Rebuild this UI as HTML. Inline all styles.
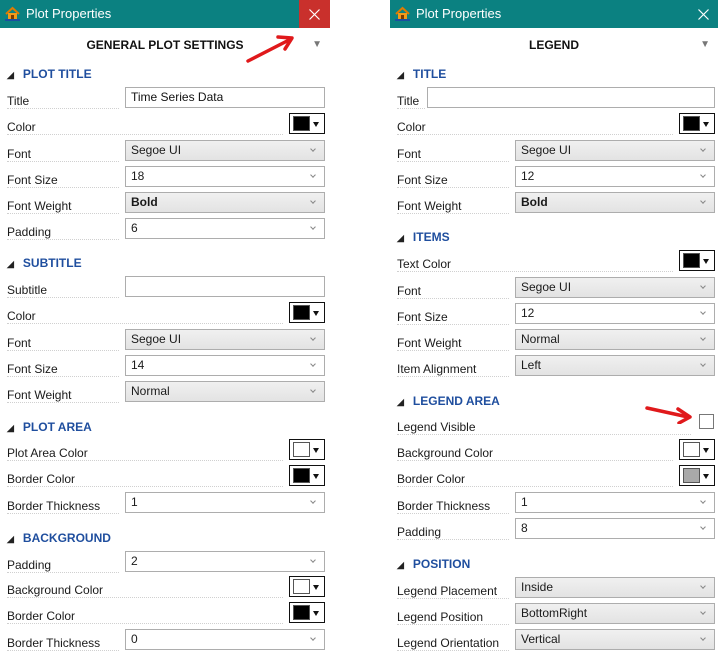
<!DOCTYPE html>
<html><head><meta charset="utf-8"><style>
*{box-sizing:border-box;margin:0;padding:0}
body{width:718px;height:667px;background:#fff;position:relative;overflow:hidden;font-family:"Segoe UI","Liberation Sans",sans-serif;font-size:12px;color:#1a1a1a}
.p{position:absolute;top:0;width:330px;height:667px;background:#fff}
.tb{position:absolute;left:0;top:0;right:0;height:28px;background:#0b8181;color:#fff;font-size:13px;line-height:27px;padding-left:26px}
.ic{position:absolute;left:5px;top:6px;width:15px;height:15px}
.x{position:absolute;top:0;right:0;width:30px;height:28px}
.x svg{position:absolute;left:10px;top:9px}
.hd{position:absolute;top:38px;left:0;right:0;text-align:center;font-weight:bold;font-size:12px;color:#111}
.dd{position:absolute;top:39px;right:8px;font-size:10px;color:#777}
.sec{position:absolute;left:7px;font-weight:bold;color:#1f4e9e;font-size:12px;line-height:14px}
.sec i{font-style:normal;color:#222;font-size:9px;margin-right:9px;display:inline-block}
.r{position:absolute;left:7px;right:5px;height:21px}
.r .dl{position:absolute;left:0;bottom:-1px;border-bottom:1px dotted #d0d0d0}
.r .lb{position:absolute;left:0;bottom:0;line-height:14px;background:#fff;padding-right:5px}
.c{position:absolute;right:0;width:200px;height:21px;border:1px solid #adadad;background:#fff;line-height:19px;padding-left:5px}
.c.g{background:linear-gradient(#f0f0f0,#e3e3e3)}
.c.v:after{content:"";position:absolute;right:9px;top:6px;width:3px;height:3px;border-right:1px solid #888;border-bottom:1px solid #888;transform:rotate(45deg)}
.sw{position:absolute;right:0;width:36px;height:21px;border:1px solid #111;background:#fff}
.sw b{position:absolute;left:3px;top:2px;width:17px;height:15px;border:1px solid #555;background:#000}
.sw:after{content:"";position:absolute;right:5px;top:8px;border-left:3.5px solid transparent;border-right:3.5px solid transparent;border-top:5px solid #111}
.cb{position:absolute;right:1px;top:1px;width:15px;height:15px;border:1px solid #777;background:#fff}
</style></head><body>

<div class="p" style="left:0">
<div class="tb"><svg class="ic" viewBox="0 0 15 15"><path d="M1 8L7.5 2 14 8" fill="none" stroke="#e07b00" stroke-width="2"/><rect x="3" y="7" width="9" height="6" fill="#f29a1a"/><rect x="6" y="9" width="3" height="4" fill="#7a3b00"/><path d="M0 13h15v2H0z" fill="#1a4fa0"/></svg>Plot Properties<div class="x" style="background:#c9302c;width:31px"><svg width="11" height="11"><path d="M0.5 0.5L10.5 10.5M10.5 0.5L0.5 10.5" stroke="#fff" stroke-width="1.2"/></svg></div></div>
<div class="hd">GENERAL PLOT SETTINGS</div><div class="dd">▼</div>
<svg style="position:absolute;left:245px;top:32px" width="50" height="32"><path d="M3 29L44 8" stroke="#e0191b" stroke-width="3.5" fill="none" stroke-linecap="round"/><path d="M33 5L47 6 40 17" stroke="#e0191b" stroke-width="3.5" fill="none" stroke-linecap="round" stroke-linejoin="round"/></svg>

<div class="sec" style="top:67px"><i>◢</i>PLOT TITLE</div>
<div class="r" style="top:87px"><div class="dl" style="width:112px"></div><span class="lb">Title</span><div class="c" style="color:#111">Time Series Data</div></div>
<div class="r" style="top:113px"><div class="dl" style="width:276px"></div><span class="lb">Color</span><div class="sw"><b></b></div></div>
<div class="r" style="top:140px"><div class="dl" style="width:112px"></div><span class="lb">Font</span><div class="c g v">Segoe UI</div></div>
<div class="r" style="top:166px"><div class="dl" style="width:112px"></div><span class="lb">Font Size</span><div class="c v">18</div></div>
<div class="r" style="top:192px"><div class="dl" style="width:112px"></div><span class="lb">Font Weight</span><div class="c g v"><b>Bold</b></div></div>
<div class="r" style="top:218px"><div class="dl" style="width:112px"></div><span class="lb">Padding</span><div class="c v">6</div></div>

<div class="sec" style="top:256px"><i>◢</i>SUBTITLE</div>
<div class="r" style="top:276px"><div class="dl" style="width:112px"></div><span class="lb">Subtitle</span><div class="c"></div></div>
<div class="r" style="top:302px"><div class="dl" style="width:276px"></div><span class="lb">Color</span><div class="sw"><b></b></div></div>
<div class="r" style="top:329px"><div class="dl" style="width:112px"></div><span class="lb">Font</span><div class="c g v">Segoe UI</div></div>
<div class="r" style="top:355px"><div class="dl" style="width:112px"></div><span class="lb">Font Size</span><div class="c v">14</div></div>
<div class="r" style="top:381px"><div class="dl" style="width:112px"></div><span class="lb">Font Weight</span><div class="c g v">Normal</div></div>

<div class="sec" style="top:420px"><i>◢</i>PLOT AREA</div>
<div class="r" style="top:439px"><div class="dl" style="width:276px"></div><span class="lb">Plot Area Color</span><div class="sw"><b style="background:#fff"></b></div></div>
<div class="r" style="top:465px"><div class="dl" style="width:276px"></div><span class="lb">Border Color</span><div class="sw"><b></b></div></div>
<div class="r" style="top:492px"><div class="dl" style="width:112px"></div><span class="lb">Border Thickness</span><div class="c v">1</div></div>

<div class="sec" style="top:531px"><i>◢</i>BACKGROUND</div>
<div class="r" style="top:551px"><div class="dl" style="width:112px"></div><span class="lb">Padding</span><div class="c v">2</div></div>
<div class="r" style="top:576px"><div class="dl" style="width:276px"></div><span class="lb">Background Color</span><div class="sw"><b style="background:#fff"></b></div></div>
<div class="r" style="top:602px"><div class="dl" style="width:276px"></div><span class="lb">Border Color</span><div class="sw"><b></b></div></div>
<div class="r" style="top:629px"><div class="dl" style="width:112px"></div><span class="lb">Border Thickness</span><div class="c v">0</div></div>
</div>

<div class="p" style="left:390px;width:328px">
<div class="tb"><svg class="ic" viewBox="0 0 15 15"><path d="M1 8L7.5 2 14 8" fill="none" stroke="#e07b00" stroke-width="2"/><rect x="3" y="7" width="9" height="6" fill="#f29a1a"/><rect x="6" y="9" width="3" height="4" fill="#7a3b00"/><path d="M0 13h15v2H0z" fill="#1a4fa0"/></svg>Plot Properties<div class="x"><svg width="11" height="11"><path d="M0.5 0.5L10.5 10.5M10.5 0.5L0.5 10.5" stroke="#fff" stroke-width="1.2"/></svg></div></div>
<div class="hd">LEGEND</div><div class="dd">▼</div>

<div class="sec" style="top:67px"><i>◢</i>TITLE</div>
<div class="r" style="top:87px;right:3px"><div class="dl" style="width:28px"></div><span class="lb">Title</span><div class="c" style="width:288px"></div></div>
<div class="r" style="top:113px;right:3px"><div class="dl" style="width:276px"></div><span class="lb">Color</span><div class="sw"><b></b></div></div>
<div class="r" style="top:140px;right:3px"><div class="dl" style="width:112px"></div><span class="lb">Font</span><div class="c g v">Segoe UI</div></div>
<div class="r" style="top:166px;right:3px"><div class="dl" style="width:112px"></div><span class="lb">Font Size</span><div class="c v">12</div></div>
<div class="r" style="top:192px;right:3px"><div class="dl" style="width:112px"></div><span class="lb">Font Weight</span><div class="c g v"><b>Bold</b></div></div>

<div class="sec" style="top:230px"><i>◢</i>ITEMS</div>
<div class="r" style="top:250px;right:3px"><div class="dl" style="width:276px"></div><span class="lb">Text Color</span><div class="sw"><b></b></div></div>
<div class="r" style="top:277px;right:3px"><div class="dl" style="width:112px"></div><span class="lb">Font</span><div class="c g v">Segoe UI</div></div>
<div class="r" style="top:303px;right:3px"><div class="dl" style="width:112px"></div><span class="lb">Font Size</span><div class="c v">12</div></div>
<div class="r" style="top:329px;right:3px"><div class="dl" style="width:112px"></div><span class="lb">Font Weight</span><div class="c g v">Normal</div></div>
<div class="r" style="top:355px;right:3px"><div class="dl" style="width:112px"></div><span class="lb">Item Alignment</span><div class="c g v">Left</div></div>

<div class="sec" style="top:394px"><i>◢</i>LEGEND AREA</div>
<svg style="position:absolute;left:254px;top:404px" width="50" height="20"><path d="M3 4L44 13" stroke="#e0191b" stroke-width="3.5" fill="none" stroke-linecap="round"/><path d="M34 5L46 13 35 19" stroke="#e0191b" stroke-width="3.5" fill="none" stroke-linecap="round" stroke-linejoin="round"/></svg>
<div class="r" style="top:413px;right:3px"><div class="dl" style="width:294px"></div><span class="lb">Legend Visible</span><div class="cb"></div></div>
<div class="r" style="top:439px;right:3px"><div class="dl" style="width:276px"></div><span class="lb">Background Color</span><div class="sw"><b style="background:#fff"></b></div></div>
<div class="r" style="top:465px;right:3px"><div class="dl" style="width:276px"></div><span class="lb">Border Color</span><div class="sw"><b style="background:#a9a9a9"></b></div></div>
<div class="r" style="top:492px;right:3px"><div class="dl" style="width:112px"></div><span class="lb">Border Thickness</span><div class="c v">1</div></div>
<div class="r" style="top:518px;right:3px"><div class="dl" style="width:112px"></div><span class="lb">Padding</span><div class="c v">8</div></div>

<div class="sec" style="top:557px"><i>◢</i>POSITION</div>
<div class="r" style="top:577px;right:3px"><div class="dl" style="width:112px"></div><span class="lb">Legend Placement</span><div class="c g v">Inside</div></div>
<div class="r" style="top:603px;right:3px"><div class="dl" style="width:112px"></div><span class="lb">Legend Position</span><div class="c g v">BottomRight</div></div>
<div class="r" style="top:629px;right:3px"><div class="dl" style="width:112px"></div><span class="lb">Legend Orientation</span><div class="c g v">Vertical</div></div>
</div>
</body></html>
